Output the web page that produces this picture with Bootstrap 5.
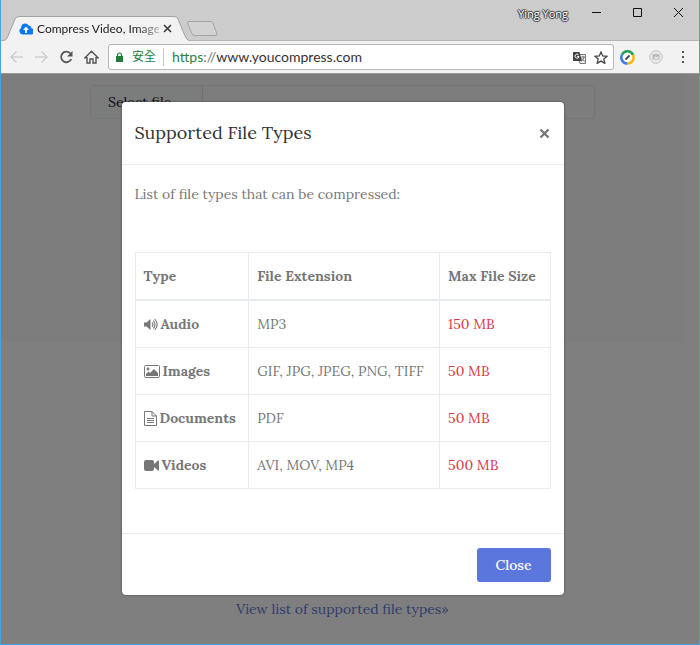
<!DOCTYPE html>
<html lang="en">
<head>
<meta charset="utf-8">
<meta name="viewport" content="width=device-width, initial-scale=1">
<title>Compress Video, Images</title>
<link href="https://cdn.jsdelivr.net/npm/bootstrap@5.3.0/dist/css/bootstrap.min.css" rel="stylesheet">
<style>
  :root { --serif: "Lora", "Liberation Serif", serif; --ui: "Lato", "Noto Sans CJK TC", sans-serif; }
  body { font-family: var(--serif); font-size: 14px; line-height: 22px; color: #777; }
  svg { display: block; flex-shrink: 0; }
  .window { border: 1px solid #42a5e0; border-top: 0; font-family: var(--ui); color: #222; }
  .plain { border: 0; padding: 0; background: none; color: inherit; }

  .titlebar { height: 41px; background: #ccc; border-bottom: 1px solid #b4b4b4; }
  .tabstrip { padding-left: 2px; height: 25px; margin-bottom: -1px; }
  .browser-tab { width: 186px; height: 25px; padding: 0 13px 0 16px; gap: 4px; }
  .tab-shape { inset: 0; width: 100%; height: 100%; }
  .tab-title { font-size: 12px; line-height: 24px; width: 122px; -webkit-mask-image: linear-gradient(90deg, #000 82%, rgba(0, 0, 0, .3)); mask-image: linear-gradient(90deg, #000 82%, rgba(0, 0, 0, .3)); }
  .new-tab { margin-left: -3px; margin-top: 4px; }
  .profile { font-family: "Open Sans", sans-serif; font-size: 11px; line-height: 16px; color: #fff; text-shadow: 1px 0 1px #333, -1px 0 1px #333, 0 1px 1px #333, 0 -1px 1px #333; margin-right: 23px; padding-top: 6px; }
  .win-buttons { gap: 30px; padding: 7px 15px 0 0; }

  .toolbar { height: 33px; background: #f2f2f2; border-bottom: 1px solid #999; padding: 0 10px 0 8px; }
  .nav-icons { gap: 10px; margin-right: 9px; }
  .omnibox { height: 26px; background: #fff; border: 1px solid #b5b5b5; border-radius: 3px; padding: 0 5px 0 6px; gap: 8px; }
  .secure { color: #1c7f3c; font-size: 12px; line-height: 18px; }
  .secure-label { border-right: 1px solid #c8c8c8; padding-right: 7px; }
  .address { font-size: 14px; line-height: 18px; outline: 0; color: #333; }
  .scheme { color: #278349; }
  .extensions { gap: 14px; margin-left: 6px; }

  .viewport-area { background: #fff; font-family: var(--serif); color: #222; padding-right: 15px; }
  .hero { background: #fafafa; height: 268px; padding: 11px 89px; }
  .picker { height: 34px; border: 1px solid #e8e8e8; border-radius: 4px; overflow: hidden; }
  .picker-btn { width: 112px; background: #f7f9f9; border-right: 1px solid #e2e2e2; padding-left: 17px; text-align: left; color: #212529; }
  .types-link { color: #6478d8; padding-top: 256px; text-decoration: none; }
  .types-link:hover { text-decoration: underline; }
  .shade { inset: 0; background: rgba(0, 0, 0, .5); padding: 28px 15px 0 0; }
  .dialog { width: 442px; max-width: 94%; }
  .dialog .modal-content { background: #fff; border: 0; border-radius: 4px; color: #777; box-shadow: 0 0 2px #333; }
  .dialog .modal-header { padding: 18px 13px; border-bottom: 1px solid #e9ecef; }
  .dialog .modal-title { font-size: 18px; line-height: 26px; color: #333; font-weight: 400; }
  .dialog .modal-body { padding: 18px 13px 44px; }
  .intro { margin-bottom: 47px; }
  .dialog .modal-footer { padding: 14px 13px 13px; border-top: 1px solid #e9ecef; }
  .dialog .modal-footer > * { margin: 0; }
  .types { color: #777; border-color: #e9ecef; table-layout: fixed; }
  .types > :not(caption) > * > * { padding: 12px 8px; color: #777; background: none; }
  .types thead tr th { border-bottom-width: 2px; }
  .types > tbody > tr > td.limit { color: #dc3545; }
  .c1 { width: 27.4%; } .c2 { width: 46%; }
  .kind { gap: 3px; }
  .close-btn { background: #5b77dd; color: #fff; border: 0; border-radius: 3px; font-size: 14px; line-height: 22px; padding: 6px 19px; font-weight: 500; }
  .close-btn:hover { background: #4864cc; color: #fff; }
</style>
<script src="https://cdn.jsdelivr.net/npm/bootstrap@5.3.0/dist/js/bootstrap.bundle.min.js"></script>
</head>
<body>
<div class="window d-flex flex-column min-vh-100">
  <header class="titlebar d-flex justify-content-between">
    <div class="tabstrip d-flex align-self-end">
      <div class="browser-tab position-relative d-flex align-items-center">
        <svg class="tab-shape position-absolute" viewBox="0 0 186 25" preserveAspectRatio="none"><path d="M0 25C4 24 4 22 5 20L12 3Q13 .5 16 .5H171Q174 .5 175 3L182 20Q184 24 186 25Z" fill="#f2f2f2"/><path d="M0 24.500C4 24 4 22 5 20L12 3Q13 .5 16 .5H171Q174 .5 175 3L182 20Q184 24 186 24.500" fill="none" stroke="#a2a2a2"/></svg>
        <svg class="position-relative" width="14" height="12" viewBox="0 0 14 12"><path d="M4 11.500A3.500 3.500 0 0 1 2.100 5C2 2 4 .5 6 .5c2 0 3.200 1 3.800 2.300C11.500 2.600 12.400 4 12.200 5.200A3.200 3.200 0 0 1 11 11.500Z" fill="#0a78f5"/><path d="M7 3.500 10 7H8v3H6V7H4Z" fill="#fff"/></svg>
        <span class="tab-title position-relative text-nowrap">Compress Video, Image</span>
        <button class="plain position-relative" aria-label="Close tab"><svg width="9" height="9" viewBox="0 0 9 9"><path d="m1 1 7 7M8 1 1 8" stroke="#333" stroke-width="1.500"/></svg></button>
      </div>
      <button class="plain new-tab align-self-start" aria-label="New tab"><svg width="33" height="17" viewBox="0 0 33 17"><path d="M3 1.500H24Q26 1.500 27 3L31 14Q31.500 15.500 29 15.500H9Q7 15.500 6 14L1.500 3Q1 1.500 3 1.500Z" fill="#d2d2d2" stroke="#a4a4a4"/></svg></button>
    </div>
    <div class="d-flex align-items-start">
      <span class="profile">Ying Yong</span>
      <div class="win-buttons d-flex">
        <button class="plain" aria-label="Minimize"><svg width="11" height="11" viewBox="0 0 11 11"><path d="M1 5.500h9" stroke="#111"/></svg></button>
        <button class="plain" aria-label="Maximize"><svg width="11" height="11" viewBox="0 0 11 11"><path d="M1.500 1.500h8v8h-8z" fill="none" stroke="#111"/></svg></button>
        <button class="plain" aria-label="Close window"><svg width="11" height="11" viewBox="0 0 11 11"><path d="m1 1 9 9M10 1l-9 9" stroke="#111"/></svg></button>
      </div>
    </div>
  </header>

  <nav class="toolbar d-flex align-items-center">
    <div class="nav-icons d-flex align-items-center">
      <button class="plain" aria-label="Back"><svg width="15" height="14" viewBox="0 0 15 14"><path d="M14 7H2M7.500 1.500 2 7l5.500 5.500" fill="none" stroke="#cfcfcf" stroke-width="1.500"/></svg></button>
      <button class="plain" aria-label="Forward"><svg width="15" height="14" viewBox="0 0 15 14"><path d="M1 7h12M7.500 1.500 13 7l-5.500 5.500" fill="none" stroke="#cfcfcf" stroke-width="1.500"/></svg></button>
      <button class="plain" aria-label="Reload"><svg width="15" height="14" viewBox="0 0 15 14"><path d="M12.300 9A5.300 5.300 0 1 1 11.300 3.300" fill="none" stroke="#555" stroke-width="1.800"/><path d="M13.500 1v5.500H8Z" fill="#555"/></svg></button>
      <button class="plain" aria-label="Home"><svg width="15" height="14" viewBox="0 0 15 14"><path d="M1 7.700 7.500 1.200 14 7.700H12V13H9V9H6V13H3V7.700Z" fill="none" stroke="#555" stroke-width="1.400"/></svg></button>
    </div>
    <div class="omnibox d-flex align-items-center flex-fill">
      <div class="secure d-flex align-items-center gap-2">
        <svg width="9" height="10" viewBox="0 0 9 10"><path d="M2.500 4.500V3a2 2 0 0 1 4 0v1.500" fill="#fff" stroke="#1c7f3c" stroke-width="1.200"/><path d="M1 4h7v6H1z" fill="#1c7f3c"/></svg>
        <span class="secure-label text-nowrap">安全</span>
      </div>
      <div class="address flex-fill" role="textbox" contenteditable="true" aria-label="Address"><span class="scheme">https</span><span class="text-secondary">://</span>www.youcompress.com</div>
      <button class="plain" aria-label="Translate"><svg width="13" height="13" viewBox="0 0 13 13"><path d="M5 3.500h7.500v9H7Z" fill="#eee" stroke="#777"/><path d="M0 1h6.500L9 10H0Z" fill="#444"/><path d="M5.500 3.800A2 2 0 1 0 6 5.600H4.200" fill="none" stroke="#fff"/><path d="M8 6h4M10 5v1M11 6q-.5 3-2.500 4M9 7.500l2.500 3" fill="none" stroke="#666" stroke-width=".8"/></svg></button>
      <button class="plain" aria-label="Bookmark"><svg width="14" height="13" viewBox="0 0 14 13"><path d="m7 1 1.700 3.900 4.300.4-3.200 2.800 1 4.200L7 10.100l-3.800 2.200 1-4.200L1 5.300l4.300-.4Z" fill="none" stroke="#444" stroke-width="1.300"/></svg></button>
    </div>
    <div class="extensions d-flex align-items-center">
      <button class="plain" aria-label="Speed extension"><svg width="15" height="15" viewBox="0 0 15 15"><circle cx="7.500" cy="7.500" r="5" fill="#fff"/><g fill="none" stroke-width="2.600"><path d="M2 4.800A6 6 0 0 1 13 5" stroke="#23a455"/><path d="M13 5A6 6 0 0 1 7.500 13.500" stroke="#fbbc05"/><path d="M7.500 13.500A6 6 0 0 1 2 4.800" stroke="#3b7ded"/></g><path d="m5.500 9.500 4-4" stroke="#444" stroke-width="1.800"/></svg></button>
      <button class="plain" aria-label="Image extension"><svg width="14" height="14" viewBox="0 0 14 14"><circle cx="7" cy="7" r="6.300" fill="#e8e8e8" stroke="#c4c4c4"/><path d="M3.500 4h7v5.500h-7z" fill="#bbb"/><path d="m4.500 8.500 2-2 1 1 1.200-1.200 1.300 2.200Z" fill="#eee"/></svg></button>
      <button class="plain" aria-label="Menu"><svg width="12" height="14" viewBox="0 0 12 14"><path d="M5 1h2v2H5zM5 6h2v2H5zM5 11h2v2H5z" fill="#555"/></svg></button>
    </div>
  </nav>

  <main class="viewport-area position-relative flex-fill">
    <div class="hero">
      <div class="picker d-flex"><button class="plain picker-btn">Select file...</button></div>
    </div>
    <div class="text-center"><a class="types-link d-inline-block" href="#types">View list of supported file types»</a></div>

    <div class="shade position-absolute d-flex justify-content-center align-items-start">
      <section class="dialog" id="types" role="dialog" aria-labelledby="types-title">
        <div class="modal-content">
          <div class="modal-header">
            <h5 class="modal-title" id="types-title">Supported File Types</h5>
            <button class="plain" aria-label="Close dialog"><svg width="13" height="13" viewBox="0 0 13 13"><path d="m2.500 2.500 8 8M10.500 2.500l-8 8" stroke="#777" stroke-width="2.400"/></svg></button>
          </div>
          <div class="modal-body">
            <p class="intro">List of file types that can be compressed:</p>
            <table class="types table table-bordered mb-0">
              <thead><tr><th class="c1" scope="col">Type</th><th class="c2" scope="col">File Extension</th><th scope="col">Max File Size</th></tr></thead>
              <tbody>
                <tr><th scope="row"><div class="kind d-flex align-items-center"><svg width="14" height="13" viewBox="0 0 14 13"><path d="M0 4.500h2.500L6.500 1v11L2.500 8.500H0Z" fill="#777"/><path d="M8 4.500q2 2 0 4M9.300 2.700q3.500 3.800 0 7.600M10.700 1q5 5.500 0 11" fill="none" stroke="#777" stroke-width="1.100"/></svg>Audio</div></th><td>MP3</td><td class="limit">150 MB</td></tr>
                <tr><th scope="row"><div class="kind d-flex align-items-center"><svg width="16" height="13" viewBox="0 0 16 13"><rect x=".5" y=".5" width="15" height="12" rx="1" fill="none" stroke="#777"/><circle cx="4" cy="4" r="1.400" fill="#777"/><path d="M2 11V9l2.500-2.500L6 8l4-4 4 4v3Z" fill="#777"/></svg>Images</div></th><td>GIF, JPG, JPEG, PNG, TIFF</td><td class="limit">50 MB</td></tr>
                <tr><th scope="row"><div class="kind d-flex align-items-center"><svg width="13" height="15" viewBox="0 0 13 15"><path d="M.5.5h7.500l4.500 4.500v9.500H.5ZM8 .5V5h4.500M3 7.500h7M3 9.500h7M3 11.500h7" fill="none" stroke="#777"/></svg>Documents</div></th><td>PDF</td><td class="limit">50 MB</td></tr>
                <tr><th scope="row"><div class="kind d-flex align-items-center"><svg width="15" height="11" viewBox="0 0 15 11"><path d="M2 0H8Q10 0 10 2V4L14 .5H15V10.500H14L10 7V9Q10 11 8 11H2Q0 11 0 9V2Q0 0 2 0Z" fill="#777"/></svg>Videos</div></th><td>AVI, MOV, MP4</td><td class="limit">500 MB</td></tr>
              </tbody>
            </table>
          </div>
          <div class="modal-footer d-flex justify-content-end"><button class="btn close-btn">Close</button></div>
        </div>
      </section>
    </div>
  </main>
</div>
</body>
</html>
